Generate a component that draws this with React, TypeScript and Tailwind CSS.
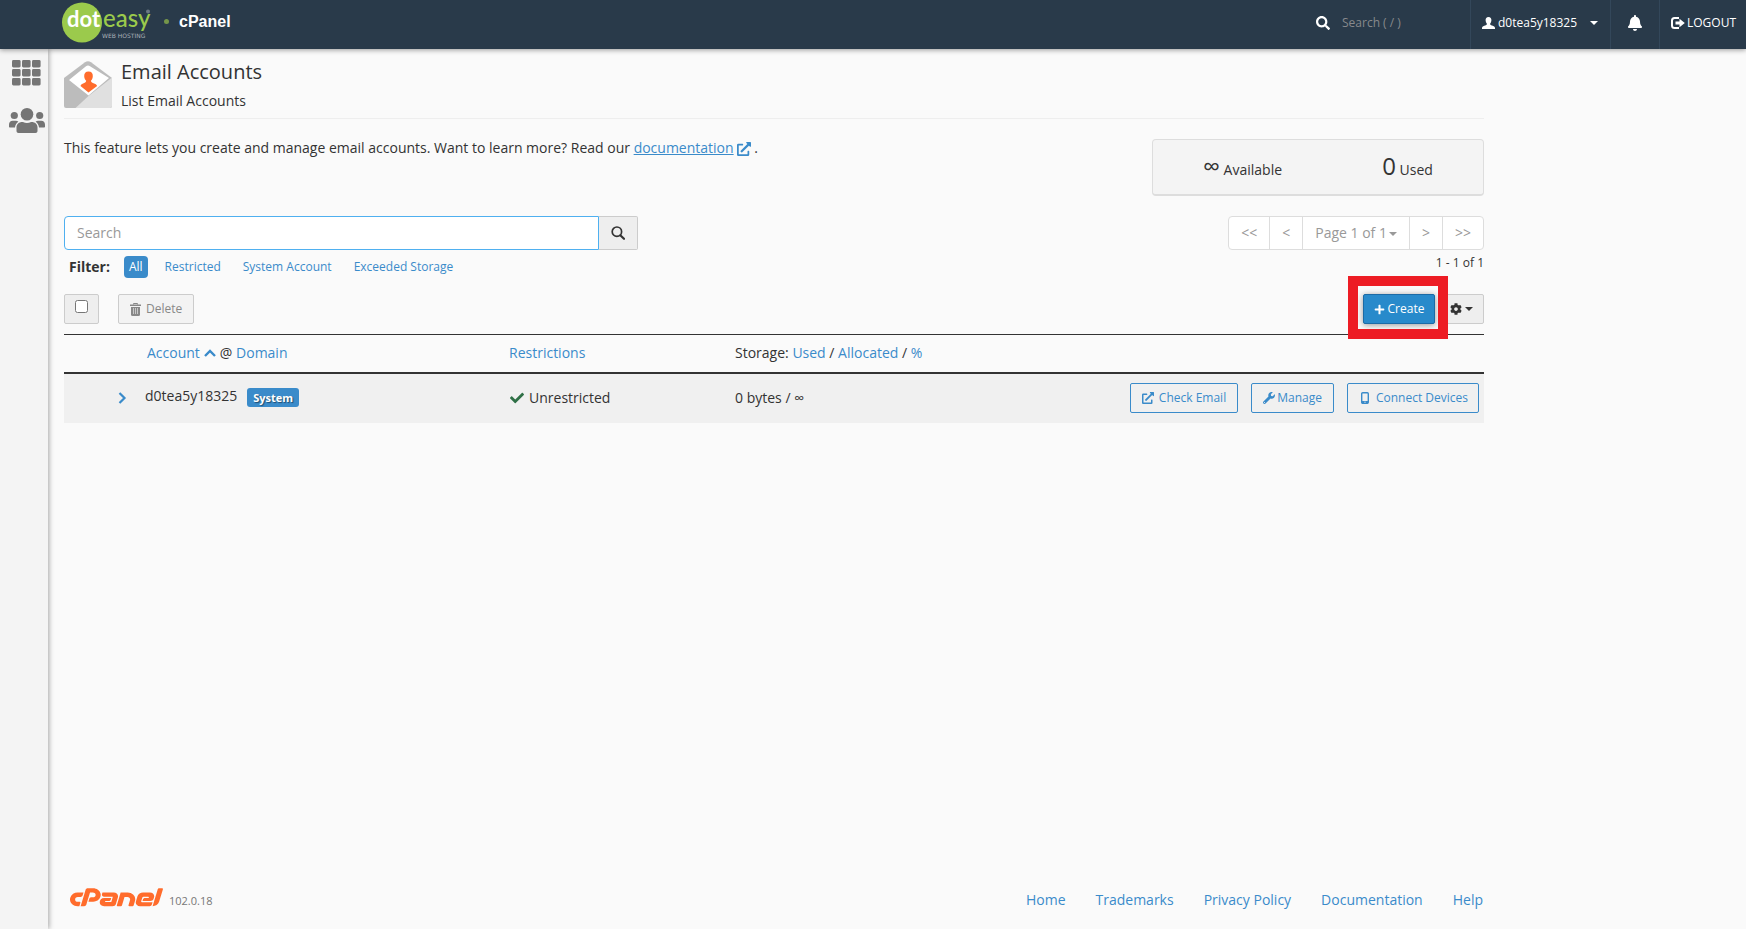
import React from "react";
import { FaCpanel, FaBell, FaPlus, FaCog, FaWrench, FaExternalLinkAlt, FaCheck, FaSearch } from "react-icons/fa";

const link = "text-[#3a8bca] hover:underline";

function Caret({ className = "" }: { className?: string }) {
  return (
    <svg viewBox="0 0 8 4" className={`inline-block h-1 w-2 ${className}`} fill="currentColor" aria-hidden="true">
      <path d="M0 0h8L4 4z" />
    </svg>
  );
}

function DoteasyLogo() {
  return (
    <svg width="90" height="44" viewBox="0 0 90 44" aria-label="doteasy web hosting">
      <circle cx="20" cy="21.500" r="20" fill="#9bca4c" />
      <text x="5" y="26" fontFamily="Lato, sans-serif" fontSize="22" fontWeight="700" fill="#fff">dot</text>
      <text x="41" y="26" fontFamily="Lato, sans-serif" fontSize="24" fontWeight="500" fill="#9bca4c">easy</text>
      <text x="40" y="37" fontFamily="'DejaVu Sans', sans-serif" fontSize="6" fill="#a9b1b8">WEB HOSTING</text>
      <circle cx="86" cy="10.500" r="2" fill="#6b7884" />
    </svg>
  );
}

function GridIcon() {
  return (
    <svg width="29" height="26" viewBox="0 0 29 26" fill="#757575" aria-hidden="true">
      {[0, 9, 18].map((y) =>
        [0, 10, 20].map((x) => <rect key={`${x}-${y}`} x={x} y={y} width="8.6" height="7.4" rx="1.4" />)
      )}
    </svg>
  );
}

function PeopleIcon() {
  return (
    <svg width="36" height="26" viewBox="0 0 36 26" fill="#757575" aria-hidden="true">
      <circle cx="18" cy="6.3" r="6.3" />
      <circle cx="5.3" cy="7.5" r="3.6" />
      <circle cx="30.7" cy="7.5" r="3.6" />
      <path d="M7.5 23v-3.5c0-3.5 2.5-5.6 5.8-5.6h.6a9 9 0 0 0 8.2 0h.6c3.3 0 5.8 2.100 5.800 5.600V23c0 1.200-.8 2-2 2h-17c-1.200 0-2-.8-2-2z" />
      <path d="M0 18.500v-1.700c0-2.400 1.500-4 3.700-4h3.200c1 0 1.900.3 2.500.9-2 1.300-3.200 3.200-3.400 5.800H1c-.6 0-1-.4-1-1zM36 18.500v-1.700c0-2.400-1.500-4-3.700-4h-3.200c-1 0-1.900.3-2.500.9 2 1.300 3.200 3.200 3.400 5.800h5c.6 0 1-.4 1-1z" />
    </svg>
  );
}

function EnvelopeIcon() {
  return (
    <svg width="48" height="47" viewBox="0 0 48 47" aria-hidden="true">
      <path d="M0 17L21 1.200Q24-.8 27 1.200L48 17v28q0 2-2 2H2q-2 0-2-2z" fill="#bcbcbc" />
      <path d="M5 19L22 5.200q2-1.400 4 0L45 17 24.500 34.500z" fill="#fff" />
      <path d="M48 16.500V45q0 2-2 2H11.500L24.500 35z" fill="#e0e0e0" />
      <path d="M24.500 10.500c3 0 4.500 2 4.300 4.700-.1 2-.9 3.600-1.900 4.600.2 1.300 1 1.900 2.600 2.500 1.800.6 3.100 1.200 3.600 2.600L24.500 31.500 16.500 25c.5-1.500 1.500-2.100 3.200-2.700 1.600-.6 2.400-1.200 2.500-2.500-1-1-1.900-2.600-2-4.600-.1-2.700 1.400-4.700 4.300-4.700z" fill="#ff6c2c" />
    </svg>
  );
}

function UserIcon() {
  return (
    <svg width="13" height="12" viewBox="0 0 13 12" fill="currentColor" aria-hidden="true">
      <path d="M6.500 0C8.500 0 9.500 1.300 9.400 3.300c-.1 1.500-.6 2.700-1.300 3.500 0 1 .5 1.300 1.900 1.800 1.900.7 2.800 1.200 3 2.400v1H0v-1c.2-1.200 1.100-1.700 3-2.400 1.400-.5 1.900-.8 1.900-1.800-.7-.8-1.200-2-1.300-3.500C3.500 1.300 4.500 0 6.500 0z" />
    </svg>
  );
}

function LogoutIcon() {
  return (
    <svg width="14" height="12" viewBox="0 0 14 12" aria-hidden="true">
      <path d="M8 1H3.500Q1 1 1 3.500v5Q1 11 3.500 11H8" fill="none" stroke="currentColor" strokeWidth="2" />
      <path d="M4.500 4.500H8.500V1.800L13.800 6 8.500 10.200V7.500h-4z" fill="currentColor" />
    </svg>
  );
}

function TrashIcon() {
  return (
    <svg width="11" height="13" viewBox="0 0 11 13" aria-hidden="true">
      <path d="M3.500 1.500V.5h4v1" fill="none" stroke="currentColor" />
      <path d="M0 1.500h11V3H0z" fill="currentColor" />
      <path d="M1 4h9v7.500q0 1.500-1.500 1.500h-6Q1 13 1 11.500z" fill="currentColor" />
      <path d="M3.500 5v6M5.500 5v6M7.500 5v6" stroke="#f3f3f3" strokeWidth=".6" />
    </svg>
  );
}

function PhoneIcon() {
  return (
    <svg width="8" height="12" viewBox="0 0 8 12" aria-hidden="true">
      <rect x=".7" y=".7" width="6.600" height="10.600" rx="1" fill="none" stroke="currentColor" strokeWidth="1.400" />
      <path d="M1 9h6v2.500H1z" fill="currentColor" />
      <circle cx="4" cy="10.200" r=".6" fill="#f0f0f0" />
    </svg>
  );
}

function MagnifierIcon() {
  return (
    <svg width="14" height="14" viewBox="0 0 14 14" fill="none" stroke="currentColor" aria-hidden="true">
      <circle cx="5.900" cy="5.700" r="4.700" strokeWidth="1.700" />
      <path d="M9.300 9.200l3.700 3.600" strokeWidth="2.200" strokeLinecap="round" />
    </svg>
  );
}

function Header() {
  return (
    <header className="relative z-10 flex h-[49px] items-stretch bg-[#293a4a] text-white shadow-[0_1px_5px_rgba(0,0,0,0.4)]">
      <a href="#home" className="flex items-center pl-[62px] pb-1">
        <DoteasyLogo />
      </a>
      <span className="ml-3 flex items-center gap-[10px] pb-[6px] font-['Liberation_Sans',sans-serif] text-base font-bold">
        <span className="h-[5px] w-[5px] rounded-full bg-[#75964a]" />
        cPanel
      </span>
      <div className="ml-auto flex items-stretch text-xs font-medium">
        <label className="flex items-center gap-3 pb-1">
          <FaSearch className="h-[14px] w-[14px]" />
          <input type="text" aria-label="Search features" placeholder="Search ( / )" className="w-[128px] bg-transparent text-xs font-normal outline-none placeholder:text-[#87898c]" />
        </label>
        <button type="button" className="flex w-[140px] items-center border-l border-[#33475a] pb-1 pl-[11px]">
          <UserIcon />
          <span className="ml-[3px]">d0tea5y18325</span>
          <Caret className="ml-[13px]" />
        </button>
        <button type="button" aria-label="Notifications" className="flex w-[49px] items-center justify-center border-l border-[#33475a] pb-1">
          <FaBell className="h-4 w-4" />
        </button>
        <a href="#logout" className="flex w-[87px] items-center gap-0.5 border-l border-[#33475a] pb-1 pl-[11px]">
          <LogoutIcon />
          LOGOUT
        </a>
      </div>
    </header>
  );
}

function Sidebar() {
  return (
    <nav className="flex w-12 shrink-0 flex-col items-center gap-[22px] bg-[#f4f4f4] pl-[5px] pt-[11px] shadow-[1px_0_5px_rgba(0,0,0,0.35)]">
      <a href="#tools" aria-label="Tools"><GridIcon /></a>
      <a href="#users" aria-label="User manager"><PeopleIcon /></a>
    </nav>
  );
}

function Pager() {
  const cell = "h-full border-l border-[#ddd] px-3";
  return (
    <div className="flex flex-col items-end">
      <div className="flex h-[34px] items-center overflow-hidden rounded border border-[#ddd] bg-white text-[#999]">
        <button type="button" className="h-full px-3">&lt;&lt;</button>
        <button type="button" className={cell}>&lt;</button>
        <button type="button" className={cell}>Page 1 of 1<Caret className="ml-0.5 align-middle" /></button>
        <button type="button" className={cell}>&gt;</button>
        <button type="button" className={cell}>&gt;&gt;</button>
      </div>
      <span className="mt-1 text-xs leading-[18px]">1 - 1 of 1</span>
    </div>
  );
}

const actionButton = "flex h-[30px] items-center rounded-xs border border-[#3a8bca] text-xs text-[#3a8bca]";

function AccountsTable() {
  return (
    <table className="mt-[10px] w-full table-fixed text-left">
      <colgroup>
        <col className="w-[81px]" />
        <col className="w-[364px]" />
        <col className="w-[226px]" />
        <col className="w-[300px]" />
        <col />
      </colgroup>
      <thead>
        <tr className="h-[38px] border-t border-b-2 border-t-[#333] border-b-[#333]">
          <td />
          <th className="pl-0.5 font-normal">
            <span className="flex items-center">
              <a href="#account" className={link}>Account</a>
              <svg viewBox="0 0 12 8" className="mx-1 h-2 w-3 text-[#3a8bca]" fill="none" stroke="currentColor" strokeWidth="2.400" aria-hidden="true"><path d="M1 7l5-5 5 5" /></svg>
              <span>@ <a href="#domain" className={link}>Domain</a></span>
            </span>
          </th>
          <th className="font-normal"><a href="#restrictions" className={link}>Restrictions</a></th>
          <th className="font-normal">
            Storage: <a href="#used" className={link}>Used</a> / <a href="#allocated" className={link}>Allocated</a> / <a href="#percent" className={link}>%</a>
          </th>
          <td />
        </tr>
      </thead>
      <tbody>
        <tr className="h-[50px] bg-[#f0f0f0]">
          <td>
            <button type="button" aria-label="Expand account" className="ml-[54px] flex text-[#3a8bca]">
              <svg width="9" height="12" viewBox="0 0 9 12" fill="none" stroke="currentColor" strokeWidth="2.200" aria-hidden="true"><path d="M1.500 1l5 5-5 5" /></svg>
            </button>
          </td>
          <td>
            <span className="flex items-center gap-[10px] pb-0.5">
              <span className="pb-0.5">d0tea5y18325</span>
              <span className="rounded-[3px] bg-[#3a8bca] px-[6px] text-[11px] leading-[19px] font-bold text-white [text-shadow:1px_1px_1px_rgba(0,0,0,0.45)]">System</span>
            </span>
          </td>
          <td>
            <span className="flex items-center gap-[5px] pl-px"><FaCheck className="h-[14px] w-[14px] text-[#2f7046]" />Unrestricted</span>
          </td>
          <td>0 bytes / <span>∞</span></td>
          <td>
            <div className="flex justify-end gap-[13px] pr-[5px]">
              <button type="button" className={`${actionButton} gap-[5px] px-[11px]`}><FaExternalLinkAlt className="h-3 w-3" />Check Email</button>
              <button type="button" className={`${actionButton} gap-0.5 px-[11px]`}><FaWrench className="h-3 w-3" />Manage</button>
              <button type="button" className={`${actionButton} gap-[7px] pr-[10px] pl-[13px]`}><PhoneIcon />Connect Devices</button>
            </div>
          </td>
        </tr>
      </tbody>
    </table>
  );
}

function Footer() {
  return (
    <footer className="mt-auto flex h-[58px] items-start justify-between pr-px pl-[6px]">
      <div className="flex items-center gap-[6px] pt-4">
        <FaCpanel viewBox="0 178 640 156" preserveAspectRatio="none" className="h-5 w-[93px] text-[#ff6c2c]" aria-label="cPanel" />
        <span className="pt-1.5 text-[11px] leading-4 text-[#777]">102.0.18</span>
      </div>
      <nav className="flex gap-[30px] pt-[19px]">
        {["Home", "Trademarks", "Privacy Policy", "Documentation", "Help"].map((t) => (
          <a key={t} href="#footer" className={link}>{t}</a>
        ))}
      </nav>
    </footer>
  );
}

export default function App() {
  return (
    <div className="flex min-h-screen flex-col bg-[#fafafa] font-['Open_Sans',sans-serif] text-sm text-[#333]">
      <Header />
      <div className="flex flex-1">
        <Sidebar />
        <main className="flex max-w-[1436px] flex-1 flex-col pl-4">
          <div className="flex gap-[9px] border-b border-[#eee] pt-3 pb-[7px]">
            <EnvelopeIcon />
            <div>
              <h1 className="text-xl leading-[22px]">Email Accounts</h1>
              <p className="mt-2 leading-5">List Email Accounts</p>
            </div>
          </div>

          <div className="mt-5 flex items-start justify-between">
            <p className="-mt-px">
              This feature lets you create and manage email accounts. Want to learn more? Read our{" "}
              <a href="#documentation" className="text-[#3a8bca]"><span className="underline">documentation</span><FaExternalLinkAlt className="ml-[3px] inline h-[14px] w-[14px]" /></a> .
            </p>
            <div className="flex h-[57px] w-[332px] items-center justify-around rounded border border-b-2 border-[#ddd] bg-[#f4f4f4] pb-0.5">
              <span><span className="text-2xl">∞</span> Available</span>
              <span><span className="text-2xl">0</span> Used</span>
            </div>
          </div>

          <div className="mt-5 flex items-start justify-between">
            <div>
              <div className="flex h-[34px] w-[574px]">
                <input type="text" aria-label="Search accounts" placeholder="Search" className="min-w-0 flex-1 rounded-l border border-[#4fb0f0] bg-white px-3 outline-none placeholder:text-[#999]" />
                <button type="button" aria-label="Search" className="flex w-[39px] items-center justify-center rounded-r-xs border border-l-0 border-[#ccc] bg-[#eee]"><MagnifierIcon /></button>
              </div>
              <div className="mt-[6px] flex items-center pl-[5px] text-xs">
                <span className="text-sm font-bold">Filter:</span>
                <button type="button" className="ml-[14px] h-[22px] rounded bg-[#3a8bca] px-[5px] text-white">All</button>
                <button type="button" className="ml-[17px] text-[#3a8bca]">Restricted</button>
                <button type="button" className="ml-[22px] text-[#3a8bca]">System Account</button>
                <button type="button" className="ml-[22px] text-[#3a8bca]">Exceeded Storage</button>
              </div>
            </div>
            <Pager />
          </div>

          <div className="mt-4 flex items-center justify-between">
            <div className="flex gap-[19px]">
              <label className="flex h-[30px] w-[35px] items-start justify-center rounded-xs border border-[#ccc] bg-[#eee] pt-[5px]">
                <input type="checkbox" aria-label="Select all accounts" className="h-[13px] w-[13px]" />
              </label>
              <button type="button" disabled className="flex h-[30px] items-center gap-[5px] rounded-xs border border-[#ccc] bg-[#f3f3f3] px-[11px] text-xs text-[#888]"><TrashIcon />Delete</button>
            </div>
            <div className="relative flex gap-[5px]">
              <button type="button" className="flex h-[30px] w-[72px] items-center justify-center gap-[3px] rounded-xs border border-[#1c6ba6] bg-[#288acb] text-xs text-white shadow-[0_1px_6px_rgba(0,0,0,0.4)]"><FaPlus className="h-[11px] w-[11px]" />Create</button>
              <button type="button" aria-label="Settings" className="flex h-[30px] w-11 items-center justify-end gap-[3px] rounded-r-xs border border-[#ccc] bg-[#eee] pr-[10px]"><FaCog className="h-3 w-3" /><Caret /></button>
              <span className="pointer-events-none absolute -top-[18px] -left-[15px] h-[63px] w-[100px] border-10 border-[#ed1c24]" />
            </div>
          </div>

          <AccountsTable />
          <Footer />
        </main>
      </div>
    </div>
  );
}
